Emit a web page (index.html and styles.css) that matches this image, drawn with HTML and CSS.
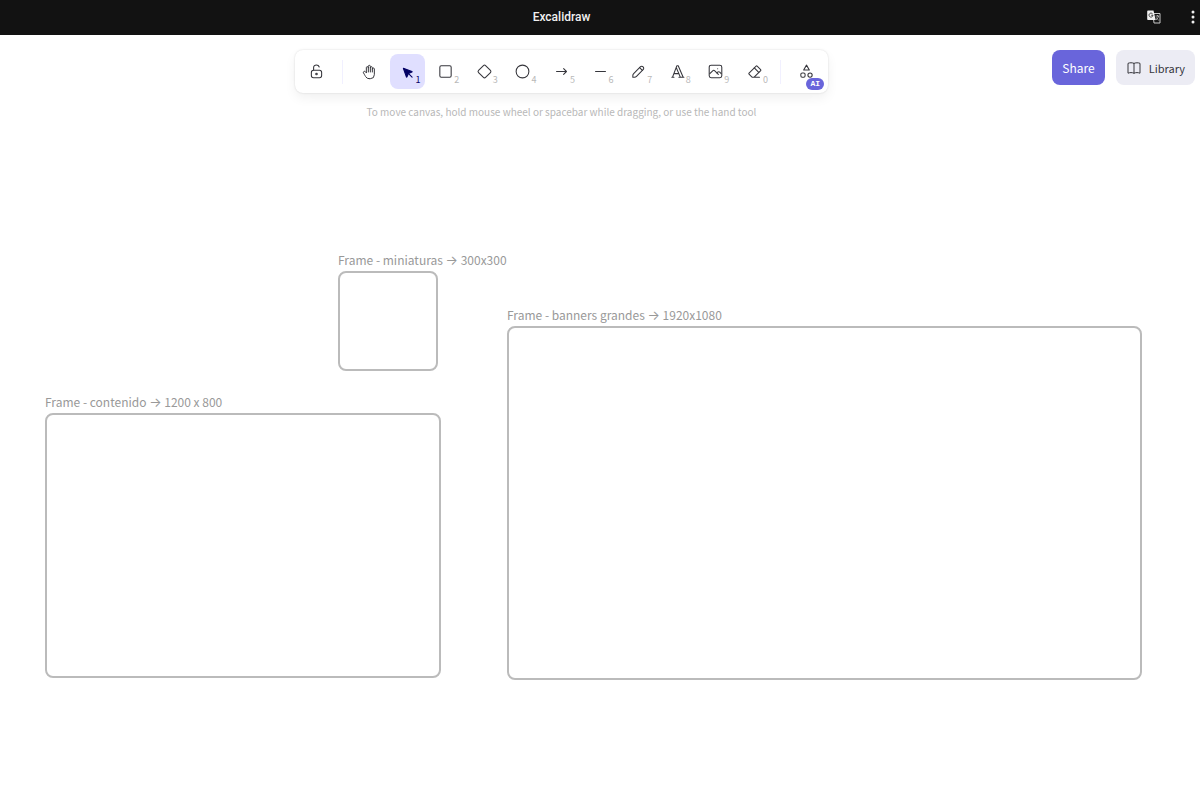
FILE: index.html
```
<!DOCTYPE html>
<html lang="en">
<head>
    <meta charset="UTF-8">
    <meta name="viewport" content="width=device-width, initial-scale=1.0">
    <title>Excalidraw</title>
    <link rel="stylesheet" href="styles.css">
</head>
<body>
    <header class="titlebar">
        <h1 class="titlebar-title">Excalidraw</h1>
        <div class="titlebar-actions">
            <button type="button" class="titlebar-button" aria-label="Translate">
                <svg width="14" height="14" viewBox="0 0 14 14">
                    <path d="M6 3.500h7v9.500H7z" fill="#121212" stroke="#c8c8c8" stroke-width="1"/>
                    <path d="M8.500 6h3.500M10.500 5v1M11.500 6c-.3 1.800-1.300 3-2.600 4M9.500 7.500c.5 1.200 1.200 2.200 2.200 2.700" fill="none" stroke="#c8c8c8" stroke-width=".8"/>
                    <path d="M1 .5h5.500l2.200 9.500H1a.8.8 0 0 1-.8-.8V1.300A.8.8 0 0 1 1 .5z" fill="#f0f0f0"/>
                    <path d="M5.600 3.900A2 2 0 1 0 6 5.300H4.200" fill="none" stroke="#333" stroke-width=".9"/>
                </svg>
            </button>
            <button type="button" class="titlebar-button" aria-label="More">
                <svg width="4" height="14" viewBox="0 0 4 14" fill="#f0f0f0">
                    <circle cx="2" cy="2" r="1.500"/>
                    <circle cx="2" cy="7" r="1.500"/>
                    <circle cx="2" cy="12" r="1.500"/>
                </svg>
            </button>
        </div>
    </header>

    <div class="menu">
        <div class="toolbar">
            <label class="tool" title="Keep selected tool active">
                <input type="checkbox" name="lock">
                <svg class="icon icon-20" viewBox="0 0 20 20">
                    <path d="M13.542 8.542H6.458a2.500 2.500 0 0 0-2.500 2.500v3.750a2.500 2.500 0 0 0 2.500 2.500h7.084a2.500 2.500 0 0 0 2.500-2.500v-3.750a2.500 2.500 0 0 0-2.500-2.500z"/>
                    <circle cx="10" cy="12.900" r=".9"/>
                    <path d="M6.600 8.300V5.400C6.600 3.500 8 2.300 9.900 2.300c1.700 0 2.900 1 3.300 2.400"/>
                </svg>
            </label>
            <div class="divider"></div>
            <div class="tools">
                <label class="tool" title="Hand">
                    <input type="radio" name="tool">
                    <svg class="icon icon-small" viewBox="0 0 24 24">
                        <path d="M8 13V5.500a1.500 1.500 0 0 1 3 0V12"/>
                        <path d="M11 5.500v-2a1.500 1.500 0 1 1 3 0V12"/>
                        <path d="M14 5.500a1.500 1.500 0 0 1 3 0V12"/>
                        <path d="M17 7.500a1.500 1.500 0 0 1 3 0V16a6 6 0 0 1-6 6h-2h.208a6 6 0 0 1-5.012-2.700L7 19c-.312-.479-1.407-2.388-3.286-5.728a1.500 1.500 0 0 1 .536-2.022a1.867 1.867 0 0 1 2.280.28L8 13"/>
                    </svg>
                </label>
                <label class="tool" title="Selection">
                    <input type="radio" name="tool" checked>
                    <svg class="icon icon-small icon-filled" viewBox="0 0 22 22">
                        <path d="M6 6l4.153 11.793a.365.365 0 0 0 .331.207a.366.366 0 0 0 .332-.207L13 13l4.787-1.994a.355.355 0 0 0 .213-.323a.355.355 0 0 0-.213-.323z"/>
                        <path d="M13.500 13.500L18 18"/>
                    </svg>
                    <span class="key">1</span>
                </label>
                <label class="tool" title="Rectangle">
                    <input type="radio" name="tool">
                    <svg class="icon" viewBox="0 0 24 24">
                        <rect x="4" y="4" width="16" height="16" rx="2"/>
                    </svg>
                    <span class="key">2</span>
                </label>
                <label class="tool" title="Diamond">
                    <input type="radio" name="tool">
                    <svg class="icon" viewBox="0 0 24 24">
                        <path d="M10.500 20.400l-6.900-6.900c-.781-.781-.781-2.219 0-3l6.900-6.900c.781-.781 2.219-.781 3 0l6.900 6.900c.781.781.781 2.219 0 3l-6.900 6.900c-.781.781-2.219.781-3 0z"/>
                    </svg>
                    <span class="key">3</span>
                </label>
                <label class="tool" title="Ellipse">
                    <input type="radio" name="tool">
                    <svg class="icon" viewBox="0 0 24 24">
                        <circle cx="12" cy="12" r="9"/>
                    </svg>
                    <span class="key">4</span>
                </label>
                <label class="tool" title="Arrow">
                    <input type="radio" name="tool">
                    <svg class="icon" viewBox="0 0 24 24">
                        <path d="M5 12h14M15 16l4-4M15 8l4 4"/>
                    </svg>
                    <span class="key">5</span>
                </label>
                <label class="tool" title="Line">
                    <input type="radio" name="tool">
                    <svg class="icon" viewBox="0 0 24 24">
                        <path d="M5 12h14"/>
                    </svg>
                    <span class="key">6</span>
                </label>
                <label class="tool" title="Draw">
                    <input type="radio" name="tool">
                    <svg class="icon icon-20" viewBox="0 0 20 20">
                        <path d="M7.643 15.690l7.774-7.773a2.357 2.357 0 1 0-3.334-3.334L4.310 12.357a3.333 3.333 0 0 0-.977 2.357v1.953h1.953c.884 0 1.732-.352 2.357-.977z"/>
                        <path d="M11.250 5.417l3.333 3.333"/>
                    </svg>
                    <span class="key">7</span>
                </label>
                <label class="tool" title="Text">
                    <input type="radio" name="tool">
                    <svg class="icon" viewBox="0 0 24 24">
                        <path d="M4 20h3M14 20h7M6.900 15h6.900M10.200 6.300L16 20M5 20l6-16h2l7 16"/>
                    </svg>
                    <span class="key">8</span>
                </label>
                <label class="tool" title="Insert image">
                    <input type="radio" name="tool">
                    <svg class="icon icon-20" viewBox="0 0 20 20">
                        <path d="M12.500 6.667h.01"/>
                        <rect x="2.600" y="2.600" width="14.800" height="14.800" rx="2.300"/>
                        <path d="M3.333 12.500l3.334-3.333c.773-.745 1.726-.745 2.500 0l4.166 4.166"/>
                        <path d="M11.667 11.667l.833-.834c.774-.744 1.726-.744 2.500 0l1.667 1.667"/>
                    </svg>
                    <span class="key">9</span>
                </label>
                <label class="tool" title="Eraser">
                    <input type="radio" name="tool">
                    <svg class="icon" viewBox="0 0 24 24">
                        <path d="M19 20H8.500l-4.210-4.300a1 1 0 0 1 0-1.410l10-10a1 1 0 0 1 1.410 0l5 5a1 1 0 0 1 0 1.410L11.500 20"/>
                        <path d="M18 13.300L11.700 7"/>
                    </svg>
                    <span class="key">0</span>
                </label>
            </div>
            <div class="divider"></div>
            <button type="button" class="tool" title="More tools">
                <svg class="icon" viewBox="0 0 24 24">
                    <path d="M12 3l-4 7h8z"/>
                    <circle cx="17" cy="17" r="3"/>
                    <rect x="4" y="14" width="6" height="6" rx="2"/>
                </svg>
                <span class="badge">AI</span>
            </button>
        </div>

        <div class="side-buttons">
            <button type="button" class="button button-share">Share</button>
            <button type="button" class="button button-library">
                <svg class="icon icon-20 icon-small" viewBox="0 0 20 20">
                    <path d="M10 16.500V4.200C8 3.200 4.500 3.200 2.500 4.200v12.300c2-1 5.500-1 7.500 0c2-1 5.500-1 7.500 0V4.200c-2-1-5.500-1-7.500 0"/>
                </svg>
                Library
            </button>
        </div>

        <p class="hint">To move canvas, hold mouse wheel or spacebar while dragging, or use the hand tool</p>
    </div>

    <!-- frames placed on the canvas -->
    <main class="canvas">
        <section class="frame frame-thumb">
            <h2 class="frame-name">Frame - miniaturas <span class="arrow">→</span> 300x300</h2>
            <div class="frame-box"></div>
        </section>
        <section class="frame frame-banner">
            <h2 class="frame-name">Frame - banners grandes <span class="arrow">→</span> 1920x1080</h2>
            <div class="frame-box"></div>
        </section>
        <section class="frame frame-content">
            <h2 class="frame-name">Frame - contenido <span class="arrow">→</span> 1200 x 800</h2>
            <div class="frame-box"></div>
        </section>
    </main>
</body>
</html>
```
FILE: styles.css
```
* {
    box-sizing: border-box;
}
body {
    margin: 0;
    min-height: 100vh;
    display: flex;
    flex-direction: column;
    background-color: #fff;
    color: #36363c;
    font-family: "Noto Sans CJK JP", "Open Sans", sans-serif;
    position: relative;
}
button {
    border: none;
    padding: 0;
    font-family: inherit;
    color: inherit;
    cursor: pointer;
}

/* title bar */
.titlebar,
.menu {
    display: grid;
    grid-template-columns: 295fr 533px 372fr;
    align-items: center;
}
.titlebar {
    height: 35px;
    background-color: #121212;
    color: #f0f0f0;
}
.titlebar-title {
    grid-column: 2;
    margin: 0;
    padding-bottom: 2px;
    font-family: Roboto, sans-serif;
    font-size: 12px;
    font-weight: 500;
    text-align: center;
}
.titlebar-actions {
    display: flex;
    justify-content: flex-end;
    gap: 30px;
    padding: 0 5px 2px 0;
}
.titlebar-button {
    display: flex;
    background: none;
}

/* toolbar */
.menu {
    padding-top: 15px;
    row-gap: 9px;
    align-items: start;
}
.toolbar {
    grid-column: 2;
    display: flex;
    align-items: center;
    gap: 8px;
    padding: 4px;
    border-radius: 8px;
    background-color: #fff;
    box-shadow: 0 0 2px rgba(0, 0, 0, 0.15), 0 5px 12px rgba(0, 0, 0, 0.06);
}
.tools {
    flex: 1;
    display: flex;
    justify-content: space-between;
}
.tool {
    position: relative;
    display: flex;
    align-items: center;
    justify-content: center;
    width: 35px;
    height: 35px;
    border-radius: 8px;
    background-color: #fff;
    cursor: pointer;
}
.tool input {
    position: absolute;
    opacity: 0;
    margin: 0;
}
.tool:has(input[type="radio"]:checked) {
    background-color: #e0dfff;
    color: #030064;
}
.divider {
    width: 1px;
    height: 24px;
    background-color: #f1f0ff;
}
.icon {
    width: 17px;
    height: 17px;
    fill: none;
    stroke: currentColor;
    stroke-width: 1.5;
    stroke-linecap: round;
    stroke-linejoin: round;
}
.icon-20 {
    stroke-width: 1.25;
}
.icon-small {
    width: 16px;
    height: 16px;
}
.icon-filled {
    fill: currentColor;
}
.key {
    position: absolute;
    right: 4px;
    bottom: 3px;
    font-size: 9px;
    line-height: 12px;
    color: #b8b8b8;
}
.tool input:checked ~ .key {
    color: #030064;
}
.badge {
    position: absolute;
    right: 0;
    bottom: -1px;
    padding: 0 4px;
    border-radius: 6px;
    background-color: #6965db;
    color: #fff;
    font-family: "Liberation Mono", monospace;
    font-size: 8px;
    font-weight: bold;
    line-height: 12px;
}
.hint {
    grid-column: 2;
    margin: 0;
    color: #b8b8b8;
    font-size: 10px;
    line-height: 20px;
    text-align: center;
}

/* buttons on the right */
.side-buttons {
    display: flex;
    justify-content: flex-end;
    gap: 11px;
    padding-right: 5px;
}
.button {
    display: flex;
    align-items: center;
    justify-content: center;
    height: 35px;
    padding: 0 10px;
    border-radius: 8px;
}
.button-share {
    background-color: #6965db;
    color: #fff;
    font-size: 12px;
}
.button-library {
    gap: 7px;
    background-color: #ececf4;
    font-size: 11px;
}

/* canvas */
.frame {
    position: absolute;
}
.frame-name {
    margin: 0;
    color: #999;
    font-size: 12px;
    font-weight: normal;
    line-height: 22px;
    white-space: nowrap;
}
.arrow {
    font-family: Inter, sans-serif;
    font-size: 13px;
    line-height: 1;
}
.frame-box {
    border: 2px solid #bbb;
    border-radius: 8px;
}
.frame-thumb {
    left: 338px;
    top: 249px;
    width: 100px;
}
.frame-thumb .frame-box {
    height: 100px;
}
.frame-banner {
    left: 507px;
    top: 304px;
    width: 635px;
}
.frame-banner .frame-box {
    height: 354px;
}
.frame-content {
    left: 45px;
    top: 391px;
    width: 396px;
}
.frame-content .frame-box {
    height: 265px;
}
```
